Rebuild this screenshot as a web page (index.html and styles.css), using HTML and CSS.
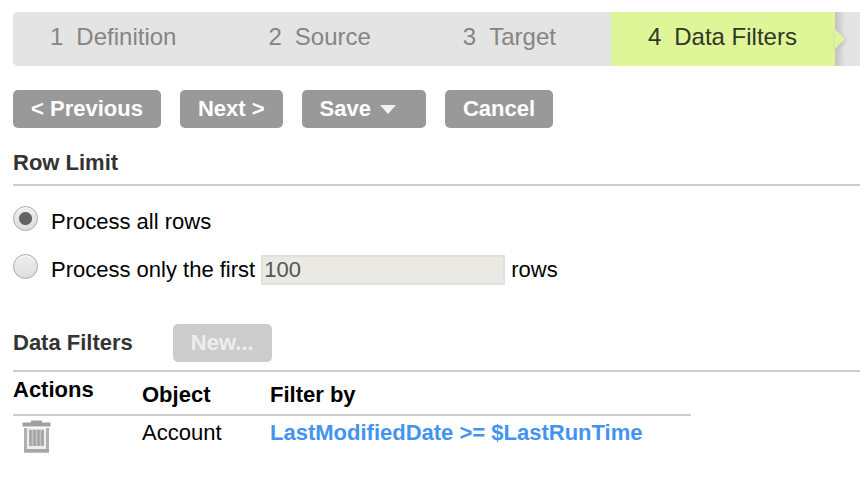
FILE: index.html
```html
<!DOCTYPE html>
<html lang="en">
<head>
<meta charset="utf-8">
<title>Data Filters</title>
<link rel="stylesheet" href="styles.css">
</head>
<body>
<main class="page">
  <ol class="steps">
    <li class="step"><span class="step-number">1</span>Definition</li>
    <li class="step"><span class="step-number">2</span>Source</li>
    <li class="step"><span class="step-number">3</span>Target</li>
    <li class="step step-active" aria-current="step"><span class="step-number">4</span>Data Filters</li>
  </ol>

  <div class="toolbar">
    <button class="button" type="button">&lt; Previous</button>
    <button class="button" type="button">Next &gt;</button>
    <button class="button button-menu" type="button">Save
      <svg class="caret" viewBox="0 0 16 10" aria-hidden="true"><path d="M0 1H16L8 10Z"/></svg>
    </button>
    <button class="button" type="button">Cancel</button>
  </div>

  <section>
    <div class="section-head">
      <h2 class="section-title">Row Limit</h2>
    </div>
    <div class="options">
      <div class="option">
        <input class="radio" type="radio" name="limit" id="limit-all" checked>
        <label for="limit-all">Process all rows</label>
      </div>
      <div class="option">
        <input class="radio" type="radio" name="limit" id="limit-first">
        <label for="limit-first">Process only the first</label>
        <input class="row-count" type="text" id="row-count" value="100" disabled>
        <label for="row-count">rows</label>
      </div>
    </div>
  </section>

  <section>
    <div class="section-head">
      <h2 class="section-title">Data Filters</h2>
      <button class="button" type="button" disabled>New...</button>
    </div>
    <table class="filters">
      <thead>
        <tr><th class="col-actions">Actions</th><th class="col-object">Object</th><th>Filter by</th></tr>
      </thead>
      <tbody>
        <tr>
          <td>
            <button class="delete" type="button" aria-label="Delete">
              <svg class="trash" viewBox="0 0 29 33" aria-hidden="true">
                <path fill="#a0a0a0" d="M9 0.500h11v2h8.500v4H0.500v-4H9z"/>
                <path fill="#b0b0b0" d="M2 8h25v24.500H2z"/>
                <path fill="#a6a6a6" d="M2 29h25v3.500H2z"/>
                <path fill="#efefef" d="M5 8h19v21H5z"/>
                <path fill="#c4c4c4" d="M7 9.500h15v16.500H7z"/>
                <path fill="none" stroke="#9e9e9e" stroke-width="2" d="M8.500 10v16M12.500 10v16M16.500 10v16M20.500 10v16"/>
              </svg>
            </button>
          </td>
          <td>Account</td>
          <td><a class="filter-link" href="#">LastModifiedDate &gt;= $LastRunTime</a></td>
        </tr>
      </tbody>
    </table>
  </section>
</main>
</body>
</html>
```
FILE: styles.css
```css
* {
  box-sizing: border-box;
}

body {
  margin: 0;
  background: #fff;
  color: #000;
  font: 22px/26px "Liberation Sans", Arial, sans-serif;
  overflow-x: hidden;
}

.page {
  padding: 12px 0 0 13px;
}

.steps {
  display: flex;
  margin: 0 0 24px;
  padding: 0;
  list-style: none;
  border-radius: 5px 0 0 5px;
  background: #e4e4e4;
  color: #858585;
  font-size: 24px;
  line-height: 50px;
  white-space: nowrap;
}

.step {
  padding: 0 55px 4px 37px;
}

.step-number {
  margin-right: 13px;
}

.step-active {
  position: relative;
  padding-right: 38px;
  background: #def698;
  color: #333628;
}

.step-active::before {
  content: "";
  position: absolute;
  top: 0;
  bottom: 0;
  left: 100%;
  width: 10px;
  background: linear-gradient(90deg, #c2c2c4, #e4e4e4);
}

.step-active::after {
  content: "";
  position: absolute;
  top: 17px;
  left: 100%;
  border: 10px solid transparent;
  border-left-color: #def698;
  border-right-width: 0;
  filter: drop-shadow(1px 1px 2px #bbb);
}

.toolbar {
  display: flex;
  gap: 19px;
  margin-bottom: 22px;
}

.button {
  padding: 0 18px;
  border: 0;
  border-radius: 5px;
  background: #999;
  color: #fff;
  font: bold 22px/38px "Liberation Sans", Arial, sans-serif;
  white-space: nowrap;
}

.button:disabled {
  background: #ccc;
  color: #eee;
}

.button-menu {
  display: flex;
  align-items: center;
  gap: 9px;
  padding-right: 30px;
}

.caret {
  width: 16px;
  height: 10px;
  fill: #f2f2f2;
}

.section-head {
  display: flex;
  align-items: center;
  gap: 40px;
  padding-bottom: 8px;
  border-bottom: 2px solid #ccc;
}

.section-title {
  margin: 0;
  color: #333;
  font-size: 22px;
  line-height: 26px;
}

.options {
  display: grid;
  gap: 18px;
  padding: 21px 0 39px;
}

.option {
  display: flex;
  align-items: center;
  height: 30px;
}

.radio {
  appearance: none;
  width: 25px;
  height: 25px;
  margin: 0 13px 7px 0;
  border: 1px solid #aaa;
  border-radius: 50%;
  background: linear-gradient(#eee, #ddd);
  box-shadow: inset 0 1px 1px #fff;
}

.radio:checked {
  background: radial-gradient(circle, #636363 6px, transparent 7px), linear-gradient(#eee, #ddd);
}

.row-count {
  width: 244px;
  height: 30px;
  margin: 0 6px;
  padding: 0 1px;
  border: 2px solid #e0e0e0;
  background: #ebe9e4;
  color: #555;
  font: 22px "Liberation Sans", Arial, sans-serif;
}

.filters {
  width: 678px;
  max-width: 100%;
  border-collapse: collapse;
  table-layout: fixed;
  text-align: left;
}

.filters th {
  padding: 10px 0 6px;
  border-bottom: 2px solid #ccc;
  vertical-align: top;
}

.filters .col-actions {
  width: 129px;
  padding-top: 5px;
}

.filters .col-object {
  width: 128px;
}

.filters td {
  padding: 4px 0 0;
  vertical-align: top;
}

.delete {
  display: block;
  margin-left: 9px;
  padding: 0;
  border: 0;
  background: none;
}

.trash {
  display: block;
  width: 29px;
  height: 33px;
}

.filter-link {
  color: #4294f0;
  font-weight: bold;
  text-decoration: none;
}
```
